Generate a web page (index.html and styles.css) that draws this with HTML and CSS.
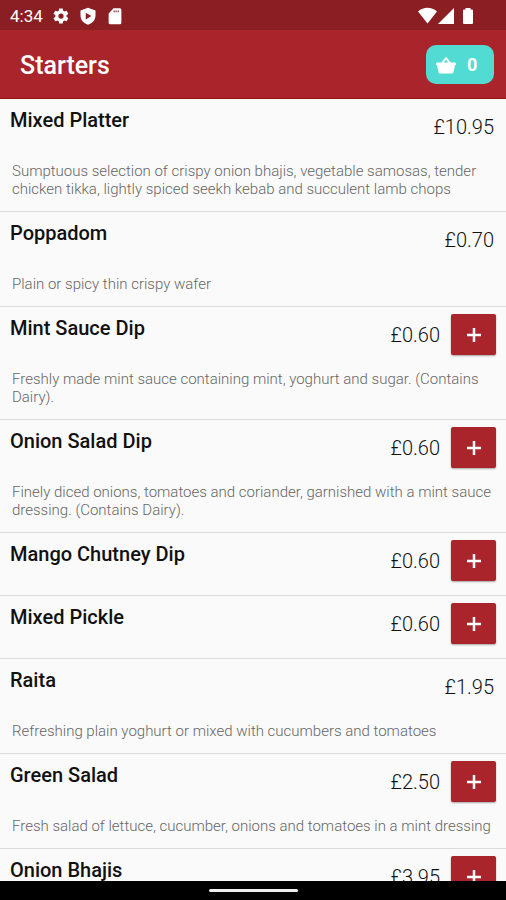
FILE: index.html
```html
<!DOCTYPE html>
<html lang="en">
<head>
<meta charset="utf-8">
<meta name="viewport" content="width=device-width, initial-scale=1">
<title>Starters</title>
<link rel="stylesheet" href="styles.css">
</head>
<body>
<div class="status">
  <span class="clock">4:34</span>
  <svg class="status-icon" viewBox="0 0 24 24"><path fill-rule="evenodd" d="M19.400 13a7.500 7.500 0 0 0 0-2l2.100-1.600c.2-.2.300-.4.100-.7l-2-3.400c-.1-.2-.4-.3-.6-.2l-2.500 1a7 7 0 0 0-1.700-1L14.400 2.400c0-.2-.2-.4-.5-.4h-4c-.2 0-.4.200-.5.400L9 5.100a7 7 0 0 0-1.700 1l-2.500-1c-.2-.1-.5 0-.6.200l-2 3.400c-.1.200-.1.500.1.700L4.500 11a8 8 0 0 0 0 2l-2.200 1.600c-.2.200-.2.400-.1.700l2 3.400c.1.200.4.300.6.200l2.500-1a7 7 0 0 0 1.700 1l.4 2.700c.1.200.3.400.5.400h4c.3 0 .5-.2.5-.4l.4-2.700a7 7 0 0 0 1.700-1l2.500 1c.2.100.5 0 .6-.2l2-3.400c.2-.3.100-.5-.1-.7zM12 15.500a3.500 3.500 0 1 1 0-7 3.500 3.500 0 0 1 0 7z"/></svg>
  <svg class="status-icon" viewBox="0 0 24 24"><path fill-rule="evenodd" d="M12 1 2 4.500V11c0 6.500 4 10.500 10 12.500 6-2 10-6 10-12.500V4.500zM9 7.500l7.500 4.500L9 16.500z"/></svg>
  <svg class="status-icon" viewBox="0 0 24 24"><path fill-rule="evenodd" d="M10 1.500 3.500 8.500V21a2 2 0 0 0 2 2h13a2 2 0 0 0 2-2V3.500a2 2 0 0 0-2-2zM10 4.500h1.500V7H10zM12.700 4.500h1.500V7h-1.500zM15.500 4.500H17V7h-1.500z"/></svg>
  <svg class="signals" viewBox="0 0 56 18"><path d="M0 4.500C5.500-.5 13.500-.5 19 4.500L9.500 16.500zM20 17 36 1v16zM46 2.500h1.500V1h5v1.500H54a1 1 0 0 1 1 1V16a1 1 0 0 1-1 1h-8a1 1 0 0 1-1-1V3.500a1 1 0 0 1 1-1z"/></svg>
</div>
<header class="bar">
  <h1>Starters</h1>
  <button class="basket" type="button" aria-label="Basket, 0 items">
    <svg viewBox="0 0 20 18"><path d="M5.500 8 10 2l4.500 6" fill="none" stroke="#fff" stroke-width="2" stroke-linejoin="round"/><path d="M.8 6.500h18.400c.5 0 .8.300.8.800V8.500c0 .5-.3.700-1 .7L17.400 16.500c-.2.700-.7 1-1.400 1H4c-.7 0-1.200-.3-1.400-1L1 9.200C.3 9.200 0 9 0 8.500V7.300c0-.5.300-.8.800-.8z"/></svg>
    <span>0</span>
  </button>
</header>
<main class="menu">
  <article class="item"><div class="head"><h2>Mixed Platter</h2><span class="price">£10.95</span></div><p>Sumptuous selection of crispy onion bhajis, vegetable samosas, tender chicken tikka, lightly spiced seekh kebab and succulent lamb chops</p></article>
  <article class="item"><div class="head"><h2>Poppadom</h2><span class="price">£0.70</span></div><p>Plain or spicy thin crispy wafer</p></article>
  <article class="item"><div class="head"><h2>Mint Sauce Dip</h2><span class="price">£0.60</span><button class="add" type="button" aria-label="Add Mint Sauce Dip"><svg viewBox="0 0 14 14"><path d="M7 0v14M0 7h14"/></svg></button></div><p>Freshly made mint sauce containing mint, yoghurt and sugar. (Contains Dairy).</p></article>
  <article class="item"><div class="head"><h2>Onion Salad Dip</h2><span class="price">£0.60</span><button class="add" type="button" aria-label="Add Onion Salad Dip"><svg viewBox="0 0 14 14"><path d="M7 0v14M0 7h14"/></svg></button></div><p>Finely diced onions, tomatoes and coriander, garnished with a mint sauce dressing. (Contains Dairy).</p></article>
  <article class="item"><div class="head"><h2>Mango Chutney Dip</h2><span class="price">£0.60</span><button class="add" type="button" aria-label="Add Mango Chutney Dip"><svg viewBox="0 0 14 14"><path d="M7 0v14M0 7h14"/></svg></button></div></article>
  <article class="item"><div class="head"><h2>Mixed Pickle</h2><span class="price">£0.60</span><button class="add" type="button" aria-label="Add Mixed Pickle"><svg viewBox="0 0 14 14"><path d="M7 0v14M0 7h14"/></svg></button></div></article>
  <article class="item"><div class="head"><h2>Raita</h2><span class="price">£1.95</span></div><p>Refreshing plain yoghurt or mixed with cucumbers and tomatoes</p></article>
  <article class="item"><div class="head"><h2>Green Salad</h2><span class="price">£2.50</span><button class="add" type="button" aria-label="Add Green Salad"><svg viewBox="0 0 14 14"><path d="M7 0v14M0 7h14"/></svg></button></div><p>Fresh salad of lettuce, cucumber, onions and tomatoes in a mint dressing</p></article>
  <article class="item"><div class="head"><h2>Onion Bhajis</h2><span class="price">£3.95</span><button class="add" type="button" aria-label="Add Onion Bhajis"><svg viewBox="0 0 14 14"><path d="M7 0v14M0 7h14"/></svg></button></div></article>
</main>
<footer class="nav"><span class="pill"></span></footer>
</body>
</html>
```
FILE: styles.css
```css
* { box-sizing: border-box; }

body {
  margin: 0;
  height: 100vh;
  display: flex;
  flex-direction: column;
  overflow: hidden;
  background: #fafafa;
  color: #111;
  font-family: Roboto, "Liberation Sans", sans-serif;
}

h1, h2, p { margin: 0; }

.status {
  flex: none;
  height: 30px;
  display: flex;
  align-items: center;
  gap: 9px;
  padding: 1px 32px 0 10px;
  background: #8b1e23;
  color: #fff;
}

.clock { font-size: 17px; line-height: 20px; }

.status svg { fill: #fff; }

.status-icon { width: 18px; height: 18px; }

.signals { width: 56px; height: 18px; margin-left: auto; }

.bar {
  flex: none;
  height: 69px;
  display: flex;
  align-items: center;
  justify-content: space-between;
  padding: 0 12px 0 20px;
  background: #a9242b;
  border-bottom: 1px solid #980f16;
  color: #fff;
}

.bar h1 {
  padding-top: 4px;
  font-size: 25px;
  line-height: 32px;
  font-weight: 500;
}

.basket {
  width: 68px;
  height: 39px;
  display: flex;
  align-items: center;
  gap: 11px;
  padding: 1px 10px 0;
  border: 0;
  border-radius: 10px;
  background: #52dbd2;
  color: #fff;
  font: 700 18px/20px Roboto, "Liberation Sans", sans-serif;
}

.basket svg { width: 20px; height: 18px; fill: #fff; }

.menu { flex: 1; min-height: 0; overflow: hidden; }

.item { border-bottom: 1px solid #dcdcdc; }

.head {
  height: 62px;
  display: flex;
  align-items: flex-start;
  padding: 7px 10px 0;
}

.head h2 {
  flex: 1;
  font-size: 20px;
  line-height: 28px;
  font-weight: 500;
}

.price {
  padding: 8px 2px 0 0;
  font-size: 20px;
  line-height: 26px;
  font-weight: 300;
}

.add {
  width: 45px;
  height: 41px;
  display: grid;
  place-items: center;
  margin-left: 9px;
  padding: 0;
  border: 0;
  border-radius: 2px;
  background: #a9242b;
  box-shadow: 0 1px 2px rgba(0, 0, 0, 0.35);
}

.add svg { width: 14px; height: 14px; stroke: #fff; stroke-width: 2.500; }

.item p {
  padding: 1px 12px 13px;
  color: #666;
  font-size: 15px;
  line-height: 18px;
  font-weight: 300;
}

.nav {
  flex: none;
  height: 19px;
  display: grid;
  place-items: center;
  background: #000;
}

.pill { width: 89px; height: 3px; border-radius: 2px; background: #eee; }
```
